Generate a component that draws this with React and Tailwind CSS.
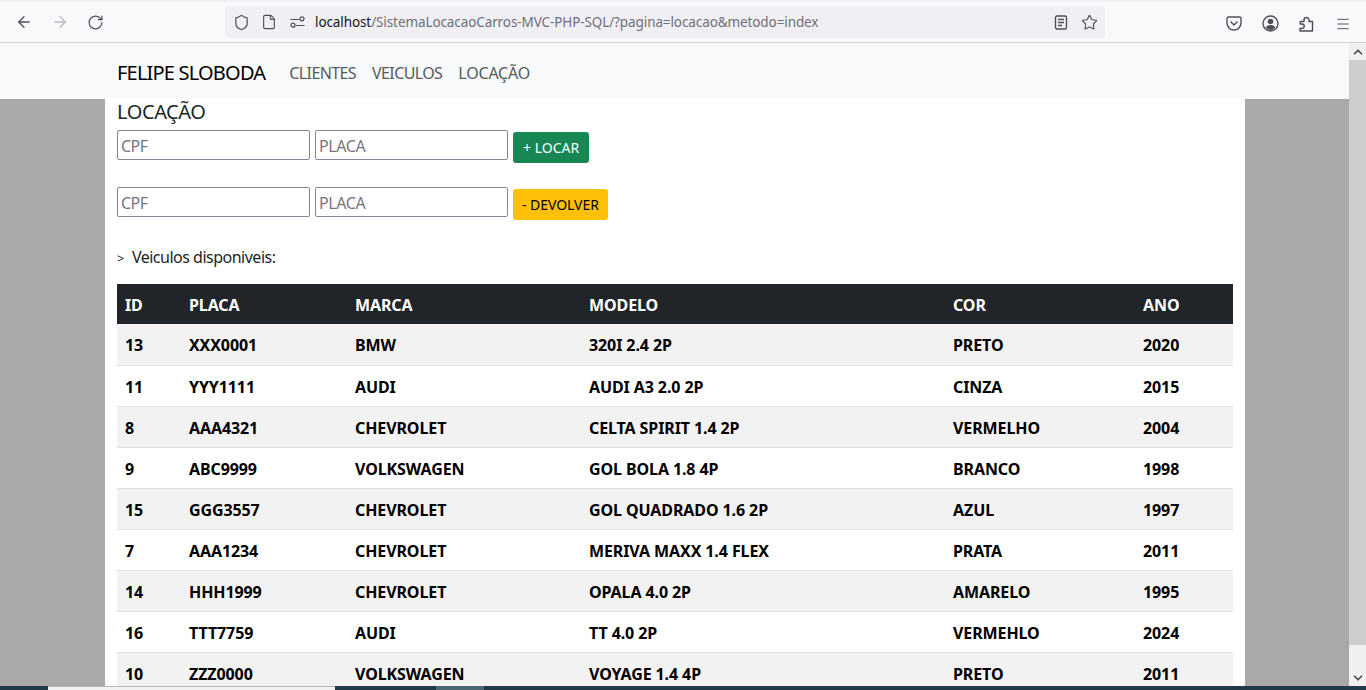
import React from 'react';
import { ArrowLeft, ArrowRight, RotateCw, Shield, File, Star, Menu, ChevronUp, ChevronDown } from 'lucide-react';

const rows = [
  [13, 'XXX0001', 'BMW', '320I 2.4 2P', 'PRETO', 2020],
  [11, 'YYY1111', 'AUDI', 'AUDI A3 2.0 2P', 'CINZA', 2015],
  [8, 'AAA4321', 'CHEVROLET', 'CELTA SPIRIT 1.4 2P', 'VERMELHO', 2004],
  [9, 'ABC9999', 'VOLKSWAGEN', 'GOL BOLA 1.8 4P', 'BRANCO', 1998],
  [15, 'GGG3557', 'CHEVROLET', 'GOL QUADRADO 1.6 2P', 'AZUL', 1997],
  [7, 'AAA1234', 'CHEVROLET', 'MERIVA MAXX 1.4 FLEX', 'PRATA', 2011],
  [14, 'HHH1999', 'CHEVROLET', 'OPALA 4.0 2P', 'AMARELO', 1995],
  [16, 'TTT7759', 'AUDI', 'TT 4.0 2P', 'VERMEHLO', 2024],
  [10, 'ZZZ0000', 'VOLKSWAGEN', 'VOYAGE 1.4 4P', 'PRETO', 2011],
];

const FormRow = ({ children, className }) => (
  <div className={'flex items-start gap-[5px] ' + className}>
    <input placeholder="CPF" className="w-[193px] h-[30px] border border-[#85859a] rounded-[2px] pl-[3px] pt-[2px] text-[16px] tracking-[-0.5px] placeholder:text-[#75757f] bg-white" />
    <input placeholder="PLACA" className="w-[193px] h-[30px] border border-[#85859a] rounded-[2px] pl-[3px] pt-[2px] text-[16px] tracking-[-0.4px] placeholder:text-[#75757f] bg-white" />
    {children}
  </div>
);

const Browser = () => (
  <div className="h-[43px] shrink-0 bg-[#f9f9fb] border-b border-[#cfcfd8] flex items-center text-[#4f4f59] pt-[2px] relative">
    <div className="absolute top-0 left-0 right-0 h-[2px] bg-[#f0f0f4]" />
    <ArrowLeft size={18} className="ml-[15px]" strokeWidth={1.7} />
    <ArrowRight size={18} className="ml-[18px] text-[#b9b9bf]" strokeWidth={1.7} />
    <RotateCw size={17} className="ml-[18px]" strokeWidth={1.7} />
    <div className="ml-[121px] w-[880px] h-[32px] bg-[#f0f0f4] rounded-[4px] flex items-center">
      <Shield size={17} className="ml-[8px]" strokeWidth={1.7} />
      <File size={16} className="ml-[11px]" strokeWidth={1.7} />
      <svg width="15" height="12" viewBox="0 0 15 12" fill="none" stroke="currentColor" strokeWidth="1.2" className="ml-[13px]">
        <path d="M0.5 3.5h8.5M6 9.5h8.5" />
        <circle cx="12" cy="2.8" r="2" />
        <circle cx="3" cy="9.2" r="2" />
      </svg>
      <span className="ml-[10px] mt-[1px] text-[13.5px] tracking-[-0.1px] whitespace-nowrap text-[#15141a]">
        localhost<span className="text-[#6f6f78]">/SistemaLocacaoCarros-MVC-PHP-SQL/?pagina=locacao&amp;metodo=index</span>
      </span>
      <div className="ml-auto flex items-center gap-[13px] mr-[7px]">
        <svg width="14" height="15" viewBox="0 0 14 15" fill="none" stroke="currentColor" strokeWidth="1.4">
          <rect x="1.5" y="1" width="11" height="13" rx="1.5" />
          <path d="M4 4.5h6M4 7.5h6M4 10.5h4" />
        </svg>
        <Star size={17} strokeWidth={1.6} />
      </div>
    </div>
    <div className="absolute left-[1226px] top-[15px] flex items-center text-[#4f4f59]">
      <svg width="16" height="15" viewBox="0 0 16 15" fill="none" stroke="currentColor" strokeWidth="1.4">
        <path d="M1 2.5Q1 1 2.5 1h11Q15 1 15 2.5V7a7 7 0 0 1-14 0Z" />
        <path d="M4.5 5.5l3.5 3.5 3.5-3.5" />
      </svg>
      <svg width="17" height="17" viewBox="0 0 17 17" fill="none" stroke="currentColor" strokeWidth="1.4" className="ml-[20px]">
        <circle cx="8.5" cy="8.5" r="7.5" />
        <circle cx="8.5" cy="6.5" r="2.8" fill="currentColor" stroke="none" />
        <path d="M3.8 12.8Q4.8 10 8.5 10t4.7 2.8Q11 15 8.5 15t-4.7-2.2Z" fill="currentColor" stroke="none" />
      </svg>
      <svg width="15" height="16" viewBox="0 0 15 16" fill="none" stroke="currentColor" strokeWidth="1.4" strokeLinejoin="round" className="ml-[20px]">
        <path d="M1 15h12.5V5.5H10V4a2.5 2.5 0 0 0-5 0v1.5H1.2V8H3a2 2 0 0 1 0 4.5H1Z" />
      </svg>
      <Menu size={16} strokeWidth={1.4} className="ml-[21px]" />
    </div>
  </div>
);

const App = () => {
  return (
    <div className="h-[690px] overflow-hidden flex flex-col bg-[#a9a9a9] font-['Noto_Sans','Open_Sans',sans-serif] text-[16px] text-[#212529]">
      <Browser />
      <div className="flex-1 min-h-0 flex">
        <div className="flex-1 min-w-0 flex flex-col overflow-hidden">
          {/* Navbar */}
          <nav className="h-[56px] shrink-0 bg-[#f8f9fa] flex items-center pl-[117px] pt-[3px]">
            <span className="text-[20px] text-black mr-[24px] tracking-[-0.8px]">FELIPE SLOBODA</span>
            <div className="flex gap-[16px] text-[#57595c] tracking-[-0.6px]">
              <span>CLIENTES</span>
              <span>VEICULOS</span>
              <span className="tracking-[-0.2px]">LOCAÇÃO</span>
            </div>
          </nav>

          <div className="mx-[105px] w-[1140px] bg-white px-[12px] flex-1 min-h-0 overflow-hidden">
            <h4 className="text-[20px] leading-[26px] mb-[5px] tracking-[-0.4px]">LOCAÇÃO</h4>
            <FormRow className="h-[57px]">
              <button className="mt-[2px] h-[31px] px-[10px] rounded-[3px] bg-[#198754] text-white text-[14px]">+ LOCAR</button>
            </FormRow>
            <FormRow className="h-[57px]">
              <button className="mt-[2px] h-[31px] px-[9px] rounded-[3px] bg-[#ffc107] text-black text-[14px] tracking-[-0.05px]">- DEVOLVER</button>
            </FormRow>
            <p className="h-[40px] leading-[26px] tracking-[-0.5px]"><span className="text-[13px] mr-[8px]">&gt;</span>Veiculos disponiveis:</p>

            <table className="w-[1116px] table-fixed border-collapse font-bold tracking-[-0.1px] text-black">
              <colgroup>
                <col className="w-[64px]" />
                <col className="w-[166px]" />
                <col className="w-[234px]" />
                <col className="w-[364px]" />
                <col className="w-[190px]" />
                <col className="w-[98px]" />
              </colgroup>
              <thead>
                <tr className="h-[40px] bg-[#212529] text-white text-left">
                  {['ID', 'PLACA', 'MARCA', 'MODELO', 'COR', 'ANO'].map((h) => (
                    <th key={h} className="px-[8px] pt-[1px] font-bold">{h}</th>
                  ))}
                </tr>
              </thead>
              <tbody>
                {rows.map((row, i) => (
                  <tr key={row[0]} className={'h-[41px] border-b border-[#dee2e6] ' + (i % 2 === 0 ? 'bg-[#f2f2f2]' : 'bg-white')}>
                    {row.map((cell, j) => (
                      <td key={j} className="px-[8px] pt-[2px] whitespace-nowrap">{cell}</td>
                    ))}
                  </tr>
                ))}
              </tbody>
            </table>
          </div>
        </div>

        {/* Scrollbar */}
        <div className="w-[17px] shrink-0 bg-[#f0f0f0] flex flex-col items-center text-[#505050]">
          <div className="h-[17px] flex items-center"><ChevronUp size={14} strokeWidth={3} /></div>
          <div className="w-full h-[585px] bg-[#cdcdcd]" />
          <div className="mt-auto h-[17px] flex items-center"><ChevronDown size={14} strokeWidth={3} /></div>
        </div>
      </div>

      {/* Taskbar peeking out at the bottom */}
      <div className="h-[4px] shrink-0 bg-[#213a46] flex">
        <div className="ml-[48px] w-[287px] bg-[#f2f2f2] border-t border-[#b5b5b5]" />
        <div className="ml-[101px] w-[48px] bg-[#4c6672]" />
      </div>
    </div>
  );
};

export default App;
